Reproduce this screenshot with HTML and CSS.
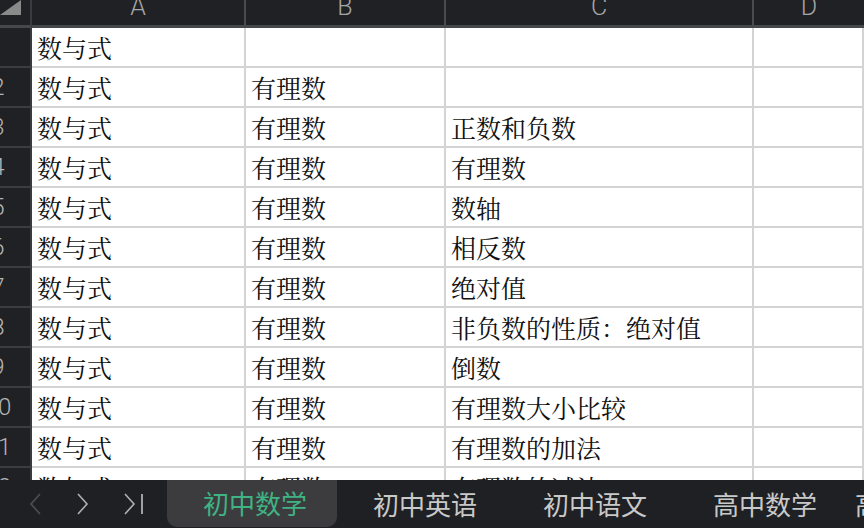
FILE: index.html
```html
<!DOCTYPE html>
<html lang="zh-CN">
<head>
<meta charset="utf-8">
<title>Sheet</title>
<link rel="stylesheet" href="styles.css">
</head>
<body>
<div class="app">
  <div class="sheet">
    <div class="grid">
      <div class="corner"><svg width="30" height="25" viewBox="0 0 30 25"><polygon points="0,15 21,15 21,0" fill="#8a8a8a"/></svg></div>
      <div class="hcell"><span>A</span></div>
      <div class="hcell"><span>B</span></div>
      <div class="hcell"><span>C</span></div>
      <div class="hcell last"><span>D</span></div>

      <div class="rh"><span>1</span></div><div class="cell">数与式</div><div class="cell"></div><div class="cell"></div><div class="cell"></div>
      <div class="rh"><span>2</span></div><div class="cell">数与式</div><div class="cell">有理数</div><div class="cell"></div><div class="cell"></div>
      <div class="rh"><span>3</span></div><div class="cell">数与式</div><div class="cell">有理数</div><div class="cell">正数和负数</div><div class="cell"></div>
      <div class="rh"><span>4</span></div><div class="cell">数与式</div><div class="cell">有理数</div><div class="cell">有理数</div><div class="cell"></div>
      <div class="rh"><span>5</span></div><div class="cell">数与式</div><div class="cell">有理数</div><div class="cell">数轴</div><div class="cell"></div>
      <div class="rh"><span>6</span></div><div class="cell">数与式</div><div class="cell">有理数</div><div class="cell">相反数</div><div class="cell"></div>
      <div class="rh"><span>7</span></div><div class="cell">数与式</div><div class="cell">有理数</div><div class="cell">绝对值</div><div class="cell"></div>
      <div class="rh"><span>8</span></div><div class="cell">数与式</div><div class="cell">有理数</div><div class="cell">非负数的性质：绝对值</div><div class="cell"></div>
      <div class="rh"><span>9</span></div><div class="cell">数与式</div><div class="cell">有理数</div><div class="cell">倒数</div><div class="cell"></div>
      <div class="rh"><span>10</span></div><div class="cell">数与式</div><div class="cell">有理数</div><div class="cell">有理数大小比较</div><div class="cell"></div>
      <div class="rh"><span>11</span></div><div class="cell">数与式</div><div class="cell">有理数</div><div class="cell">有理数的加法</div><div class="cell"></div>
      <div class="rh"><span>12</span></div><div class="cell">数与式</div><div class="cell">有理数</div><div class="cell">有理数的减法</div><div class="cell"></div>
    </div>
  </div>
  <div class="tabbar">
    <div class="nav">
      <svg class="arrow dim" width="14" height="22" viewBox="0 0 14 22"><polyline points="11,1 2,11 11,21" fill="none" stroke="currentColor" stroke-width="1.6"/></svg>
      <svg class="arrow" width="14" height="22" viewBox="0 0 14 22"><polyline points="2,1 11,11 2,21" fill="none" stroke="currentColor" stroke-width="1.6"/></svg>
      <svg class="arrow" width="22" height="22" viewBox="0 0 22 22"><polyline points="2,1 11,11 2,21" fill="none" stroke="currentColor" stroke-width="1.6"/><line x1="19" y1="1" x2="19" y2="21" stroke="currentColor" stroke-width="1.8"/></svg>
    </div>
    <div class="tab active">初中数学</div>
    <div class="tab">初中英语</div>
    <div class="tab">初中语文</div>
    <div class="tab">高中数学</div>
    <div class="tab tight">高中英语</div>
  </div>
</div>
</body>
</html>
```
FILE: styles.css
```css
html, body {
  margin: 0;
  padding: 0;
  background: #202124;
}
.app {
  width: 864px;
  height: 528px;
  display: flex;
  flex-direction: column;
  overflow: hidden;
}
.sheet {
  height: 480px;
  overflow: hidden;
  background: #fff;
}
.grid {
  display: grid;
  grid-template-columns: 32px 214px 200px 308px 1fr;
  grid-template-rows: 28px repeat(12, 40px);
}
.corner, .hcell {
  background: #202124;
  border-bottom: 3px solid #46474a;
  box-sizing: border-box;
  overflow: hidden;
}
.corner {
  border-right: 2px solid #3a3b3d;
}
.corner svg { display: block; }
.hcell {
  border-right: 2px solid #4a4b4d;
  text-align: center;
  font-family: Roboto, "Liberation Sans", sans-serif;
  font-weight: 300;
  font-size: 25px;
  color: #a6a6a6;
  line-height: 25px;
}
.hcell span {
  display: block;
  margin-top: -6px;
}
.hcell.last { border-right: none; }
.rh {
  background: #202124;
  border-right: 2px solid #3a3b3d;
  border-bottom: 2px solid #3c3d3f;
  box-sizing: border-box;
  overflow: hidden;
  display: flex;
  align-items: center;
  font-family: Roboto, "Liberation Sans", sans-serif;
  font-weight: 300;
  font-size: 24px;
  color: #b4b4b4;
}
.rh span {
  display: block;
  width: 60px;
  margin-left: -32px;
  text-align: center;
  flex: none;
}
.cell {
  border-right: 2px solid #d4d4d4;
  border-bottom: 2px solid #d4d4d4;
  box-sizing: border-box;
  padding-left: 5px;
  display: flex;
  align-items: center;
  white-space: nowrap;
  overflow: hidden;
  font-family: "Noto Serif CJK SC", "Noto Sans CJK SC", serif;
  font-size: 25px;
  color: #111;
}
.tabbar {
  height: 48px;
  display: flex;
  align-items: stretch;
  background: #1f2023;
  white-space: nowrap;
}
.nav {
  width: 167px;
  flex: none;
  display: flex;
  align-items: center;
  padding-left: 29px;
  box-sizing: border-box;
  gap: 33px;
}
.arrow { color: #b0b0b0; display: block; }
.arrow.dim { color: #4e4f52; }
.tab {
  width: 170px;
  flex: none;
  display: flex;
  align-items: center;
  justify-content: center;
  font-family: "Noto Sans CJK SC", sans-serif;
  font-size: 26px;
  color: #c9c9c9;
  padding: 0 0 2px 6px;
  box-sizing: border-box;
}
.tab.active {
  background: #3c3c3f;
  color: #3fb383;
  border-radius: 0 0 10px 10px;
  margin-bottom: 1px;
}
.tab.tight {
  justify-content: flex-start;
  padding-left: 8px;
}
```
